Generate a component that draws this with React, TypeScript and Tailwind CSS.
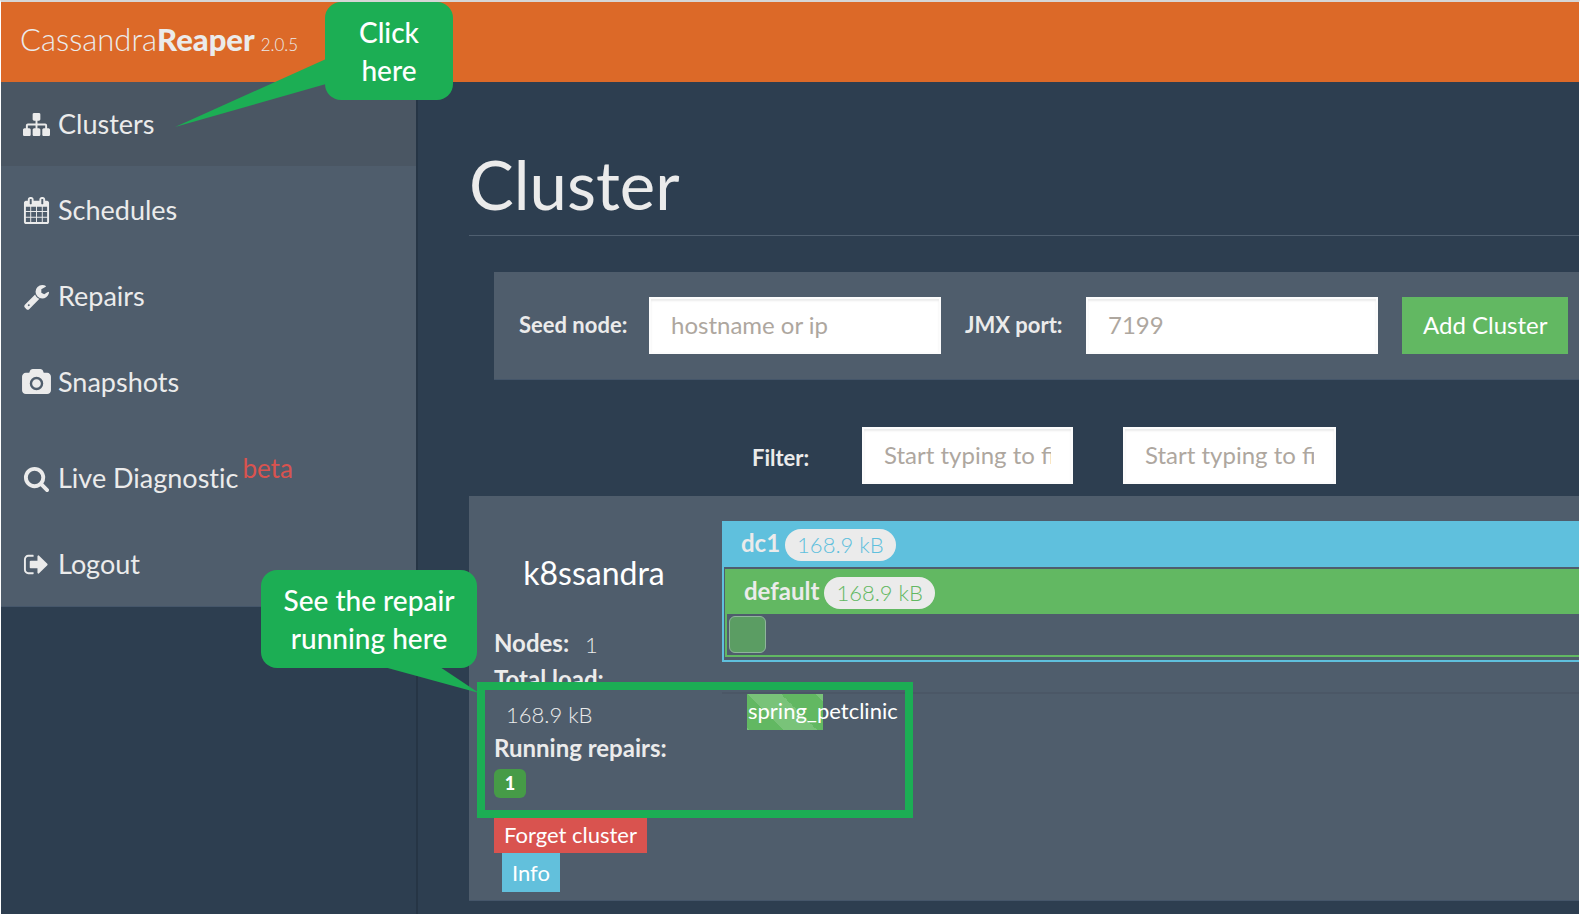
import React from "react";

type IconProps = { d: string; box?: string; wide?: boolean };

function Icon({ d, box = "0 0 1792 1792", wide }: IconProps) {
  return (
    <svg
      viewBox={box}
      fill="currentColor"
      aria-hidden="true"
      className={wide ? "h-[27px] w-[29px] shrink-0" : "size-[27px] shrink-0"}
    >
      <path d={d} />
    </svg>
  );
}

const ICONS = {
  sitemap:
    "M1792 1248v320q0 40-28 68t-68 28h-320q-40 0-68-28t-28-68v-320q0-40 28-68t68-28h96v-192h-512v192h96q40 0 68 28t28 68v320q0 40-28 68t-68 28h-320q-40 0-68-28t-28-68v-320q0-40 28-68t68-28h96v-192h-512v192h96q40 0 68 28t28 68v320q0 40-28 68t-68 28h-320q-40 0-68-28t-28-68v-320q0-40 28-68t68-28h96v-192q0-52 38-90t90-38h512v-192h-96q-40 0-68-28t-28-68v-320q0-40 28-68t68-28h320q40 0 68 28t28 68v320q0 40-28 68t-68 28h-96v192h512q52 0 90 38t38 90v192h96q40 0 68 28t28 68z",
  calendar:
    "M192 1664h288v-288h-288v288zm352 0h320v-288h-320v288zm-352-352h288v-320h-288v320zm352 0h320v-320h-320v320zm-352-384h288v-288h-288v288zm736 736h320v-288h-320v288zm-384-736h320v-288h-320v288zm768 736h288v-288h-288v288zm-384-352h320v-320h-320v320zm-352-864v-288q0-13-9.5-22.5t-22.5-9.5h-64q-13 0-22.5 9.5t-9.5 22.5v288q0 13 9.5 22.5t22.5 9.5h64q13 0 22.5-9.5t9.5-22.5zm736 864h288v-320h-288v320zm-384-384h320v-288h-320v288zm384 0h288v-288h-288v288zm32-480v-288q0-13-9.5-22.5t-22.5-9.5h-64q-13 0-22.5 9.5t-9.5 22.5v288q0 13 9.5 22.5t22.5 9.5h64q13 0 22.5-9.5t9.5-22.5zm384-64v1280q0 52-38 90t-90 38h-1408q-52 0-90-38t-38-90v-1280q0-52 38-90t90-38h128v-96q0-66 47-113t113-47h64q66 0 113 47t47 113v96h384v-96q0-66 47-113t113-47h64q66 0 113 47t47 113v96h128q52 0 90 38t38 90z",
  wrench:
    "M448 1472q0-26-19-45t-45-19-45 19-19 45 19 45 45 19 45-19 19-45zm644-420l-682 682q-37 37-90 37-52 0-91-37l-106-108q-38-36-38-90 0-53 38-91l681-681q39 98 114.5 173.5t173.5 114.5zm634-435q0 39-23 106-47 134-164.5 217.5t-258.5 83.5q-185 0-316.5-131.5t-131.5-316.5 131.5-316.5 316.5-131.5q58 0 121.5 16.5t107.5 46.5q16 11 16 28t-16 28l-293 169v224l193 107q5-3 79-48.5t135.5-81 70.5-35.5q15 0 23.5 10t8.5 25z",
  camera:
    "M960 672q119 0 203.5 84.5t84.5 203.5-84.5 203.5-203.5 84.5-203.5-84.5-84.5-203.5 84.5-203.5 203.5-84.5zm704-416q106 0 181 75t75 181v896q0 106-75 181t-181 75h-1408q-106 0-181-75t-75-181v-896q0-106 75-181t181-75h224l51-136q19-49 69.5-84.5t103.5-35.5h512q53 0 103.5 35.5t69.5 84.5l51 136h224zm-704 1152q185 0 316.5-131.5t131.5-316.5-131.5-316.5-316.5-131.5-316.5 131.5-131.5 316.5 131.5 316.5 316.5 131.5z",
  search:
    "M1216 832q0-185-131.5-316.5t-316.5-131.5-316.5 131.5-131.5 316.5 131.5 316.5 316.5 131.5 316.5-131.5 131.5-316.5zm512 832q0 52-38 90t-90 38q-54 0-90-38l-343-342q-179 124-399 124-143 0-273.5-55.5t-225-150-150-225-55.5-273.5 55.5-273.5 150-225 225-150 273.5-55.5 273.5 55.5 225 150 150 225 55.5 273.5q0 220-124 399l343 343q37 37 37 90z",
  signOut:
    "M704 1440q0 4 1 20t.5 26.5-3 23.5-10 19.5-20.5 6.5h-320q-119 0-203.5-84.5t-84.5-203.5v-704q0-119 84.5-203.5t203.5-84.5h320q13 0 22.5 9.5t9.5 22.5q0 4 1 20t.5 26.5-3 23.5-10 19.5-20.5 6.5h-320q-66 0-113 47t-47 113v704q0 66 47 113t113 47h312l11.5 1 11.5 3 8 5.5 7 9 2 13.5zm928-544q0 26-19 45l-544 544q-19 19-45 19t-45-19-19-45v-288h-448q-26 0-45-19t-19-45v-384q0-26 19-45t45-19h448v-288q0-26 19-45t45-19 45 19l544 544q19 19 19 45z",
};

type NavItem = { label: string; icon: string; box?: string; active?: boolean; tag?: string };

const NAV: NavItem[] = [
  { label: "Clusters", icon: ICONS.sitemap, active: true },
  { label: "Schedules", icon: ICONS.calendar },
  { label: "Repairs", icon: ICONS.wrench },
  { label: "Snapshots", icon: ICONS.camera, box: "0 0 1920 1792" },
  { label: "Live Diagnostic", icon: ICONS.search, tag: "beta" },
  { label: "Logout", icon: ICONS.signOut },
];

function Sidebar() {
  return (
    <aside className="w-[417px] shrink-0 border-r-2 border-[#263545]">
      <nav className="flex flex-col gap-0.5 border-b border-[#45566a] bg-[#4f5d6c] [font-variant-ligatures:none]">
        {NAV.map((item) => (
          <a
            key={item.label}
            href={"#" + item.label.toLowerCase().replace(" ", "-")}
            className={
              "flex items-center px-5 text-[27px] leading-[36px] " +
              (item.tag ? "pt-[34px] pb-6 " : "py-6 ") +
              (item.active ? "bg-[#4a5663]" : "")
            }
          >
            <span className="flex w-[31px] justify-center">
              <Icon d={item.icon} box={item.box} wide={!!item.box} />
            </span>
            <span className="ml-1.5">{item.label}</span>
            {item.tag && (
              <sup className="ml-1 -mt-5 self-center text-[26px] leading-[36px] text-[#d9534f] [vertical-align:baseline] top-0">
                {item.tag}
              </sup>
            )}
          </a>
        ))}
      </nav>
    </aside>
  );
}

const INPUT =
  "h-[57px] border-2 border-[#fcfcfc] bg-white px-5 pb-0.5 text-[24px] text-[#555] shadow-[inset_0_2px_2px_rgba(0,0,0,0.08)] outline-none placeholder:text-[#aea79f] placeholder:opacity-100 ";

function AddClusterForm() {
  return (
    <form
      onSubmit={(e) => e.preventDefault()}
      className="ml-[25px] flex items-center border-b border-[#45566a] bg-[#4f5d6c] p-[25px] whitespace-nowrap"
    >
      <label htmlFor="seed" className="w-[130px] shrink-0 pb-0.5 text-[22px] font-bold">
        Seed node:
      </label>
      <input id="seed" placeholder="hostname or ip" className={INPUT + "w-[292px] shrink-0"} />
      <label htmlFor="jmx" className="ml-6 w-[121px] shrink-0 pb-0.5 text-[22px] font-bold">
        JMX port:
      </label>
      <input id="jmx" placeholder="7199" className={INPUT + "w-[292px] shrink-0"} />
      <button className="ml-6 h-[57px] shrink-0 bg-[#62b862] px-[21px] pb-0.5 text-[24px] text-white">
        Add Cluster
      </button>
    </form>
  );
}

function Filters() {
  return (
    <div className="mt-[47px] flex items-center pl-[283px]">
      <label htmlFor="filter-name" className="w-[110px] shrink-0 pt-1 text-[22px] font-bold">
        Filter:
      </label>
      <input id="filter-name" placeholder="Start typing to filter..." className={INPUT + "w-[211px]"} />
      <input
        aria-label="Filter repairs"
        placeholder="Start typing to filter..."
        className={INPUT + "ml-[50px] w-[213px]"}
      />
    </div>
  );
}

function Load({ tone }: { tone: string }) {
  return (
    <span
      className={
        "flex h-8 items-center rounded-full bg-[#ebebeb] px-3 text-[22px] font-light " + tone
      }
    >
      168.9 kB
    </span>
  );
}

function ClusterCard() {
  return (
    <section className="mt-3 flex border-b border-[#45566a] bg-[#4f5d6c] pt-[25px] pb-2 text-[22px] leading-[34px]">
      <div className="w-[253px] shrink-0 pl-[25px]">
        <h2 className="mt-8 mb-[33px] w-[200px] text-center text-[32px] leading-[40px]">
          <a href="#k8ssandra" className="text-white">k8ssandra</a>
        </h2>
        <dl>
          <div className="flex h-[36px]">
            <dt className="text-[24px] font-bold">Nodes:</dt>
            <dd className="ml-4 leading-[38px] font-light">1</dd>
          </div>
          <dt className="text-[24px] font-bold">Total load:</dt>
          <dd className="ml-3 h-[35px] leading-[38px] font-light">168.9 kB</dd>
          <dt className="text-[24px] font-bold">Running repairs:</dt>
          <dd>
            <a
              href="#running"
              className="mt-1 flex h-[29px] w-8 items-center justify-center rounded-md bg-[#469b47] pb-0.5 text-[18px] font-black text-white"
            >
              1
            </a>
          </dd>
        </dl>
        <div className="mt-[18px] flex flex-col items-start text-white">
          <button className="h-[37px] bg-[#d9534f] px-2.5 leading-[34px]">Forget cluster</button>
          <button className="ml-2 h-[39px] bg-[#62c0dc] px-2.5 leading-[38px]">Info</button>
        </div>
      </div>
      <div className="min-w-0 flex-1">
        <div className="border-y-2 border-l-2 border-[#5fc0dd] pb-[3px]">
          <div className="flex h-[44px] items-center bg-[#5fc0dd] pl-[17px]">
            <span className="mr-[5px] pb-1 text-[24px] font-bold">dc1</span>
            <Load tone="text-[#5fc0dd]" />
          </div>
          <div className="mt-0.5 ml-px border-y-2 border-l-2 border-[#62b862]">
            <div className="flex h-[43px] items-center bg-[#62b862] pl-[17px]">
              <span className="mr-[5px] pb-1 text-[24px] font-bold">default</span>
              <Load tone="text-[#62b862]" />
            </div>
            <div className="p-0.5">
              <button
                aria-label="Node in default rack"
                className="block size-[37px] rounded-md border border-[#8fb59b] bg-[#5b9d63]"
              />
            </div>
          </div>
        </div>
        <div className="mt-[30px] border-t-2 border-[#4b5766]">
          <div className="ml-[25px] h-[36px] w-[76px] bg-[#62b862] bg-[linear-gradient(45deg,rgba(255,255,255,.15)_25%,transparent_25%,transparent_50%,rgba(255,255,255,.15)_50%,rgba(255,255,255,.15)_75%,transparent_75%)] bg-[length:68px_68px] pl-px leading-[34px] text-white">
            spring_petclinic
          </div>
        </div>
      </div>
    </section>
  );
}

const CALLOUT =
  "absolute flex h-[98px] items-center justify-center rounded-2xl bg-[#1cae54] text-center text-[28px] leading-[38px] font-medium text-white ";

function Annotations() {
  return (
    <>
      <div className={CALLOUT + "top-0.5 left-[325px] w-[128px]"}>
        Click
        <br />
        here
      </div>
      <svg className="absolute top-[59px] left-[175px] h-[68px] w-[151px]" viewBox="0 0 151 68" aria-hidden="true">
        <path d="M151 0V25L0 68Z" fill="#1cae54" />
      </svg>
      <div className={CALLOUT + "top-[570px] left-[261px] w-[216px]"}>
        See the repair
        <br />
        running here
      </div>
      <svg className="absolute top-[667px] left-[384px] h-[26px] w-[95px]" viewBox="0 0 95 26" aria-hidden="true">
        <path d="M0 0H56L95 26Z" fill="#1cae54" />
      </svg>
      <div className="absolute top-[682px] left-[477px] h-[136px] w-[436px] border-8 border-[#1cae54]" />
    </>
  );
}

export default function App() {
  return (
    <div className="relative flex min-h-screen flex-col overflow-hidden border-x border-t-2 border-x-white border-t-[#d6d6d6] bg-[#2d3e50] font-[Lato,sans-serif] text-[#ebebeb]">
      <header className="flex h-20 items-baseline bg-[#dc6928] px-[19px] pt-[15px] text-[31px] leading-[45px] font-light">
        <span>Cassandra</span>
        <strong className="font-black">Reaper</strong>
        <span className="ml-1.5 text-[17px]">2.0.5</span>
      </header>
      <div className="flex flex-1">
        <Sidebar />
        <main className="min-w-0 flex-1 pl-[51px]">
          <h1 className="mt-[62px] border-b border-[#4f5f70] pb-[11px] text-[67px] leading-[80px]">Cluster</h1>
          <div className="mt-9">
            <AddClusterForm />
          </div>
          <Filters />
          <ClusterCard />
        </main>
      </div>
      <div className="absolute -top-0.5 -left-px">
        <Annotations />
      </div>
    </div>
  );
}
